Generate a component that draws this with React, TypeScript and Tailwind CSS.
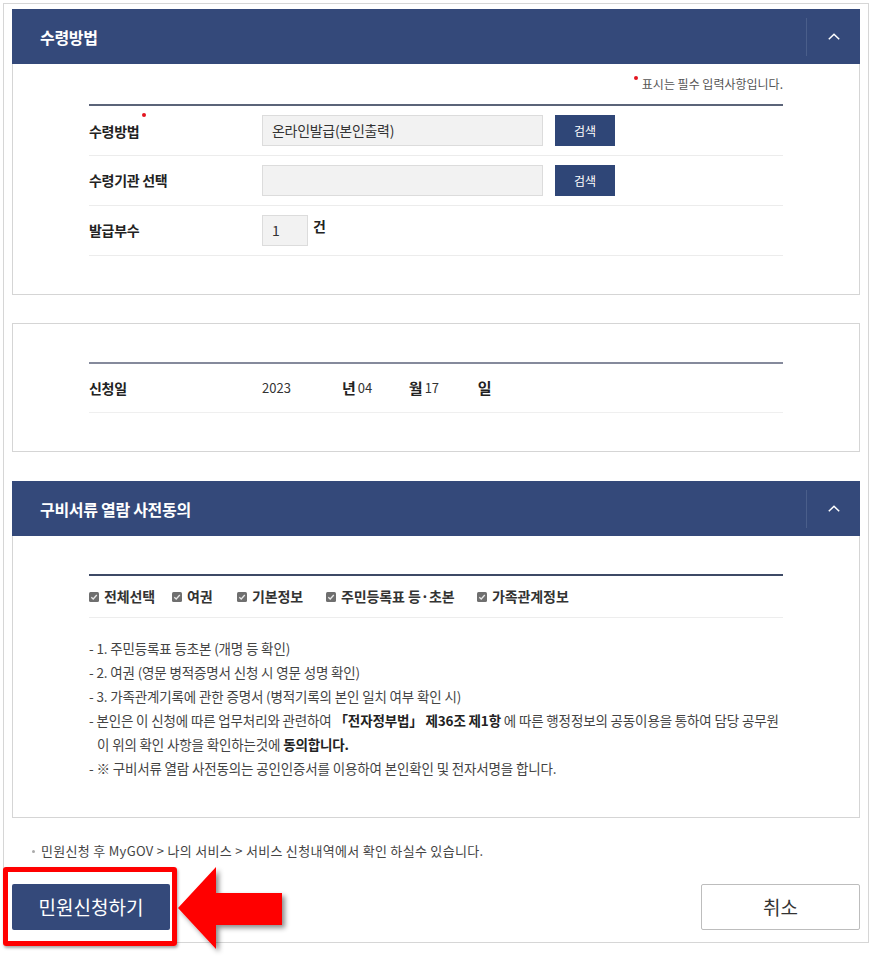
import React from "react";

const NAVY = "bg-[#34497a]";

function Chevron() {
  return (
    <svg width="14" height="9" viewBox="0 0 14 9" fill="none">
      <polyline points="1.8,7.3 7,2.2 12.2,7.3" stroke="#ffffff" strokeWidth="1.5" />
    </svg>
  );
}

function PanelHeader({ title }: { title: string }) {
  return (
    <div className={`${NAVY} h-[55px] flex items-center`}>
      <div className="flex-1 pl-[28px] text-white text-[16px] font-bold tracking-[-0.3px]">{title}</div>
      <div className="h-[38px] w-px bg-[#4a5e8a]" />
      <div className="w-[53px] flex items-center justify-center">
        <Chevron />
      </div>
    </div>
  );
}

function CheckIcon() {
  return (
    <svg width="10" height="10" viewBox="0 0 10 10" className="shrink-0">
      <rect x="0" y="0" width="10" height="10" rx="1.5" fill="#6f6f6f" />
      <polyline points="2.3,5.2 4.2,7 7.8,3" fill="none" stroke="#e8e8e8" strokeWidth="1.3" />
    </svg>
  );
}

function Check({ label, w }: { label: string; w: string }) {
  return (
    <div className={`flex items-center gap-[5px] ${w}`}>
      <CheckIcon />
      <span className="text-[14px] font-bold text-[#333] tracking-[-0.1px]">{label}</span>
    </div>
  );
}

export default function App() {
  return (
    <div className="relative w-[872px] h-[960px] bg-white font-['Noto_Sans_CJK_KR','Noto_Sans',sans-serif] text-[#333]">
      <div className="ml-[3px] pt-[3px]">
        <div className="w-[866px] border border-[#d6d6d6] px-[8px] pt-[5px] pb-[12px]">
          {/* Panel 1 */}
          <div className="w-[848px]">
            <PanelHeader title="수령방법" />
            <div className="border-x border-b border-[#d5d5d5] pb-[38px]">
              <div className="pt-[12px] h-[40px] pr-[76px] flex justify-end">
                <div className="flex items-start h-[16px]">
                  <span className="w-[4px] h-[4px] rounded-full bg-[#e3151f] mt-[0px] mr-[4px]" />
                  <span className="text-[12px] leading-[16px] text-[#555]">표시는 필수 입력사항입니다.</span>
                </div>
              </div>
              <div className="ml-[76px] w-[694px] border-t-2 border-[#5b6479]">
                <div className="h-[50px] border-b border-[#ececec] flex items-center">
                  <div className="w-[173px] flex items-start">
                    <span className="text-[14px] font-bold text-[#222] tracking-[-0.3px] leading-[20px]">수령방법</span>
                    <span className="w-[4px] h-[4px] rounded-full bg-[#e3151f] ml-[3px] -mt-[8px]" />
                  </div>
                  <div className="w-[281px] h-[31px] bg-[#f2f2f2] border border-[#dcdcdc] flex items-center pl-[9px] text-[14px] text-[#333] tracking-[-0.3px]">
                    온라인발급(본인출력)
                  </div>
                  <button className="ml-[12px] w-[60px] h-[31px] bg-[#2f4677] text-white text-[12px]">검색</button>
                </div>
                <div className="h-[50px] border-b border-[#ececec] flex items-center">
                  <div className="w-[173px] text-[14px] font-bold text-[#222] tracking-[-0.3px]">수령기관 선택</div>
                  <div className="w-[281px] h-[31px] bg-[#f2f2f2] border border-[#dcdcdc]" />
                  <button className="ml-[12px] w-[60px] h-[31px] bg-[#2f4677] text-white text-[12px]">검색</button>
                </div>
                <div className="h-[50px] border-b border-[#ececec] flex items-center">
                  <div className="w-[173px] text-[14px] font-bold text-[#222] tracking-[-0.3px]">발급부수</div>
                  <div className="w-[46px] h-[31px] bg-[#f2f2f2] border border-[#dcdcdc] flex items-center pl-[9px] text-[14px]">1</div>
                  <span className="ml-[5px] mb-[8px] text-[14px] font-bold text-[#222]">건</span>
                </div>
              </div>
            </div>
          </div>

          {/* Panel 2 */}
          <div className="w-[848px] mt-[28px] border border-[#d5d5d5] pt-[38px] pb-[38px]">
            <div className="ml-[76px] w-[694px] border-t-2 border-[#858a9c]">
              <div className="h-[49px] border-b border-[#efefef] flex items-center">
                <div className="w-[173px] text-[14px] font-bold text-[#222] tracking-[-0.3px]">신청일</div>
                <span className="w-[80px] text-[13px] text-[#333]">2023</span>
                <span className="text-[15px] font-bold text-[#222]">년</span>
                <span className="w-[53px] pl-[2px] text-[13px] text-[#333]">04</span>
                <span className="text-[15px] font-bold text-[#222]">월</span>
                <span className="w-[55px] pl-[2px] text-[13px] text-[#333]">17</span>
                <span className="text-[15px] font-bold text-[#222]">일</span>
              </div>
            </div>
          </div>

          {/* Panel 3 */}
          <div className="w-[848px] mt-[29px]">
            <PanelHeader title="구비서류 열람 사전동의" />
            <div className="border-x border-b border-[#d5d5d5] pt-[38px] pb-[37px]">
              <div className="ml-[76px] w-[694px] border-t-2 border-[#3e4a66]">
                <div className="h-[42px] border-b border-[#ededed] flex items-center">
                  <Check label="전체선택" w="w-[83px]" />
                  <Check label="여권" w="w-[65px]" />
                  <Check label="기본정보" w="w-[89px]" />
                  <Check label="주민등록표 등·초본" w="w-[151px]" />
                  <Check label="가족관계정보" w="" />
                </div>
              </div>
              <div className="ml-[76px] w-[720px] pt-[18px] text-[13.5px] leading-[24px] text-[#444] tracking-[-0.15px]">
                <div>- 1. 주민등록표 등초본 (개명 등 확인)</div>
                <div>- 2. 여권 (영문 병적증명서 신청 시 영문 성명 확인)</div>
                <div>- 3. 가족관계기록에 관한 증명서 (병적기록의 본인 일치 여부 확인 시)</div>
                <div className="whitespace-nowrap">
                  - 본인은 이 신청에 따른 업무처리와 관련하여{" "}
                  <b className="text-[#222]">「전자정부법」 제36조 제1항</b> 에 따른 행정정보의 공동이용을 통하여 담당 공무원
                </div>
                <div className="pl-[8px]">
                  이 위의 확인 사항을 확인하는것에 <b className="text-[#222]">동의합니다.</b>
                </div>
                <div>- ※ 구비서류 열람 사전동의는 공인인증서를 이용하여 본인확인 및 전자서명을 합니다.</div>
              </div>
            </div>
          </div>

          {/* notice */}
          <div className="mt-[24px] pl-[20px] flex items-center h-[18px]">
            <span className="w-[3px] h-[3px] rounded-full bg-[#aaa] mr-[6px]" />
            <span className="text-[13px] text-[#444] tracking-[0.3px]">
              민원신청 후 MyGOV &gt; 나의 서비스 &gt; 서비스 신청내역에서 확인 하실수 있습니다.
            </span>
          </div>

          {/* buttons */}
          <div className="mt-[24px] w-[848px] flex justify-between">
            <button className="w-[158px] h-[46px] bg-[#34497a] rounded-[2px] text-white text-[19px]">
              민원신청하기
            </button>
            <button className="w-[159px] h-[46px] bg-white border border-[#bdbdbd] rounded-[2px] text-[#333] text-[19px]">
              취소
            </button>
          </div>
        </div>
      </div>

      {/* red annotation box */}
      <div className="absolute left-[3px] top-[867px] w-[174px] h-[79px] border-[5px] border-[#ff0000] rounded-[3px] shadow-[1px_2px_3px_rgba(0,0,0,0.35)]" />
      {/* red arrow */}
      <svg className="absolute left-[170px] top-[860px]" width="130" height="100" viewBox="170 860 130 100">
        <defs>
          <filter id="sh" x="-20%" y="-20%" width="150%" height="150%">
            <feDropShadow dx="3" dy="3" stdDeviation="2.5" floodColor="#000" floodOpacity="0.45" />
          </filter>
        </defs>
        <polygon
          points="178,908 216,867 216,893 282,893 282,925 216,925 216,949"
          fill="#ff0000"
          filter="url(#sh)"
        />
      </svg>
    </div>
  );
}
